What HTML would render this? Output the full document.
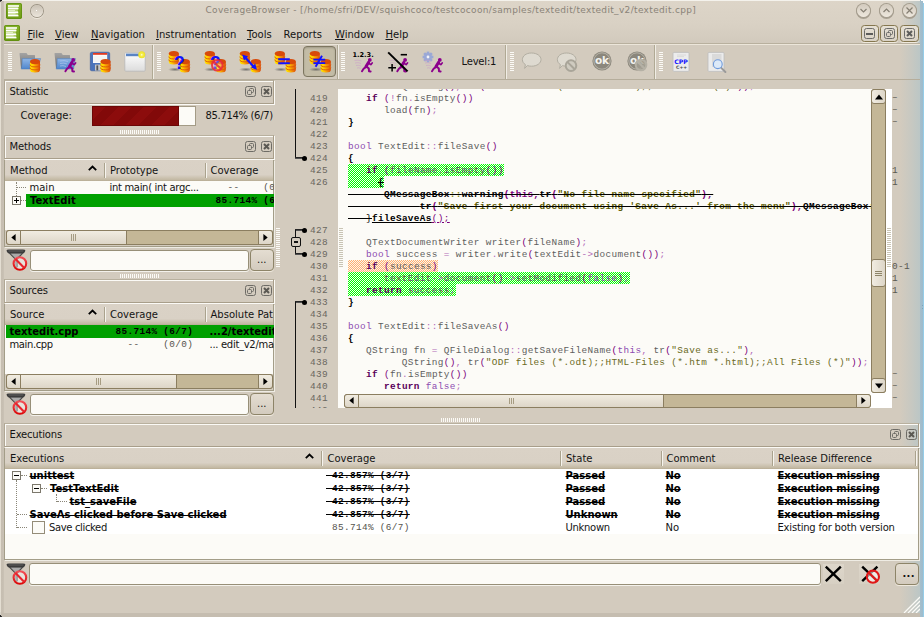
<!DOCTYPE html><html><head><meta charset="utf-8"><title>CoverageBrowser</title><style>
html,body{margin:0;padding:0}
body{width:924px;height:617px;overflow:hidden;position:relative;background:#d3cbbe;
 font:10px/13px "DejaVu Sans","Liberation Sans",sans-serif;color:#141414;}
.a{position:absolute}
.t{position:absolute;white-space:pre;line-height:13px;height:13px}
.b{font-weight:bold}
.m{font-family:"Liberation Mono","DejaVu Sans Mono",monospace;font-size:9.4px;letter-spacing:0.36px;white-space:pre}
.s{text-decoration:line-through}
u{text-decoration:underline}
#win{left:0;top:0;width:924px;height:617px;background:linear-gradient(#ddd5c8 0,#d9d1c4 24px,#d2cabd 43px,#d3cbbe 44px,#d3cbbe 617px)}
.dock{position:absolute;height:22px;border-top:1px solid #fbfaf6;border-right:1px solid #fbfaf6;border-bottom:1px solid #a39b86;box-shadow:0 1px 0 #fbfaf6;box-sizing:border-box;background:#d3cfc4}
.dock .t{left:5px;top:4px}
.dbtn{position:absolute;width:11px;height:11px;box-sizing:border-box;border:1px solid #6e6c66;border-radius:2.5px;top:5px}
.hdr{position:absolute;height:21px;box-sizing:border-box;background:linear-gradient(#dad2c6 0,#d9d1c5 70%,#c2b8a2 95%,#b5aa92 100%)}
.hdr .t{top:6px}
.sep{position:absolute;top:3px;width:1px;height:15px;background:#aaa28d;box-shadow:1px 0 0 #f6f4ee}
.view{position:absolute;background:#fcfbf7;border:1px solid #a39d88;border-top:0;box-sizing:border-box;box-shadow:1px 1px 0 #efece4}
.sel{position:absolute;background:#00a000;height:13px}
.hs{position:absolute;height:14px;background:#c4b797;box-sizing:border-box;border:1px solid #8b7e60;border-radius:3px}
.vs{position:absolute;width:14px;background:#c4b797;box-sizing:border-box;border:1px solid #8b7e60;border-radius:3px}
.sb{position:absolute;box-sizing:border-box;background:linear-gradient(#f1ece1,#ddd6c8);border:1px solid #8b7e60;border-radius:3px}
.vs .sb,.sbv{background:linear-gradient(90deg,#f1ece1,#ddd6c8)}
.inp{position:absolute;height:21px;background:#fcfbf7;border:1px solid #978f78;border-radius:3px;box-sizing:border-box;box-shadow:0 1px 0 #f4f2ec}
.btn{position:absolute;box-sizing:border-box;border:1px solid #8d8468;border-radius:4px;background:linear-gradient(#e4ddd1,#d3cbbe);box-shadow:0 1px 0 #efe9de}
.hh{position:absolute;height:4px;width:40px;background:repeating-linear-gradient(90deg,#fbfaf6 0,#fbfaf6 1px,transparent 1px,transparent 2px)}
.vh{position:absolute;width:4px;background:repeating-linear-gradient(180deg,#fbfaf6 0,#fbfaf6 1px,transparent 1px,transparent 2px)}
.tbh{position:absolute;width:4px;height:20px;top:52px;background:repeating-linear-gradient(180deg,#fbfaf6 0,#fbfaf6 1px,transparent 1px,transparent 2px)}
.tbs{position:absolute;top:45px;height:34px;width:1px;background:#b0a994;box-shadow:1px 0 0 #f0ede5}
.ic{position:absolute;width:24px;height:24px;overflow:visible}
.dot{position:absolute;border-top:1px dotted #8a8678;height:0}
.dotv{position:absolute;border-left:1px dotted #8a8678;width:0}
.exp{position:absolute;width:9px;height:9px;box-sizing:border-box;border:1px solid #7c786c;background:#fcfbf7}
.exp:before{content:"";position:absolute;left:1px;top:3px;width:5px;height:1px;background:#000}
.exp.p:after{content:"";position:absolute;left:3px;top:1px;width:1px;height:5px;background:#000}
.code{position:absolute;left:0;height:12px;line-height:12px;color:#5e5e5e}
.k{color:#5a005a;font-weight:bold}
.ty{color:#8c4ab0}
.p{color:#7a007a}
.st{color:#6a6a1c}
.bk{color:#000;font-weight:bold}
.gr{background:repeating-conic-gradient(#00ff00 0% 25%,#f6fbf0 0% 50%) 0 0/2px 2px}
.or{background:repeating-conic-gradient(#ffb070 0% 25%,#fcf6ee 0% 50%) 0 0/2px 2px}
.o{color:#b26ab8}
.del{text-decoration:line-through;text-decoration-color:#000;color:#000}
.del b{color:#000}
.ds{color:#8a8a20;font-weight:bold}
.dp{color:#7a007a;font-weight:bold}
.dst{color:#5c5c00;font-weight:bold}
.ins{color:#000;text-decoration:underline}
.insp{color:#7a007a;text-decoration:underline}
.ln{position:absolute;left:310px;width:20px;height:12px;line-height:12px;color:#6a675e}
</style></head><body>
<div id="win" class="a"></div>
<div class="a" style="left:0;top:0;width:924px;height:1px;background:#f4f2ec"></div>
<div class="a" style="left:0;top:1px;width:4px;height:616px;background:linear-gradient(90deg,#e4ded2 0,#e4ded2 1px,#c6beb1 1px,#c7bfb2 3.4px,#d3cbbe 4px)"></div>
<div class="a" style="left:900px;top:1px;width:20px;height:612px;background:linear-gradient(90deg,rgba(190,198,196,0),rgba(190,198,196,.55) 55%,rgba(186,198,198,.95))"></div>
<div class="a" style="left:920px;top:0;width:4px;height:617px;background:linear-gradient(90deg,#a6bfcc 0,#9dbccd 3px,#96cde8 3px,#96cde8 4px)"></div><div class="a" style="left:922px;top:305px;width:1px;height:1px;background:#7fa4b8"></div><div class="a" style="left:922px;top:308px;width:1px;height:1px;background:#7fa4b8"></div>
<div class="a" style="left:0;top:613px;width:920px;height:4px;background:#c5bdb0"></div><div class="a" style="left:0;top:615px;width:1px;height:2px;background:#222"></div><div class="a" style="left:1px;top:616px;width:1px;height:1px;background:#333"></div><div class="a" style="left:0;top:612px;width:1px;height:3px;background:#d8d2c6"></div>
<div class="a" style="left:0;top:0;width:2px;height:1px;background:#222"></div><div class="a" style="left:0;top:1px;width:1px;height:1px;background:#555"></div>
<div class="a" style="left:921px;top:0;width:3px;height:1px;background:#fff"></div><div class="a" style="left:923px;top:1px;width:1px;height:2px;background:#fff"></div>
<svg class="a" style="left:6px;top:3px" width="16" height="16" viewBox="0 0 16 16"><use href="#appicon"/></svg>
<svg class="a" style="left:4px;top:25px" width="16" height="16" viewBox="0 0 16 16"><use href="#appicon"/></svg>
<div class="a" style="left:30.5px;top:4.5px;width:12px;height:12px;border-radius:50%;background:linear-gradient(#c9c1b4,#ebe5db);box-shadow:0 0 0 1px #9c9485,0 1px 0 1px #efe9de"></div><div class="a" style="left:36px;top:10px;width:1px;height:1px;background:#fff"></div>
<div class="t" style="left:205.5px;top:4px;font-size:9px;letter-spacing:0.335px;color:#8a8378">CoverageBrowser - [/home/sfri/DEV/squishcoco/testcocoon/samples/textedit/textedit_v2/textedit.cpp]</div>
<div class="a" style="left:857.0px;top:4px;width:13px;height:13px;border-radius:50%;background:linear-gradient(#d2cabd,#eee8de);box-shadow:0 0 0 1px #a59d8e,0 1px 0 1px #a8a092"></div>
<svg class="a" style="left:856.0px;top:3px" width="15" height="15" viewBox="-7.5 -7.5 15 15"><path d="M-3 -1.5 L0 1.5 L3 -1.5" fill="none" stroke="#857f73" stroke-width="1.2"/></svg>
<div class="a" style="left:880.0px;top:4px;width:13px;height:13px;border-radius:50%;background:linear-gradient(#d2cabd,#eee8de);box-shadow:0 0 0 1px #a59d8e,0 1px 0 1px #a8a092"></div>
<svg class="a" style="left:879.0px;top:3px" width="15" height="15" viewBox="-7.5 -7.5 15 15"><path d="M-3 1.5 L0 -1.5 L3 1.5" fill="none" stroke="#857f73" stroke-width="1.2"/></svg>
<div class="a" style="left:903.0px;top:4px;width:13px;height:13px;border-radius:50%;background:linear-gradient(#d2cabd,#eee8de);box-shadow:0 0 0 1px #a59d8e,0 1px 0 1px #a8a092"></div>
<svg class="a" style="left:902.0px;top:3px" width="15" height="15" viewBox="-7.5 -7.5 15 15"><path d="M-3 -3 L3 3 M3 -3 L-3 3" fill="none" stroke="#857f73" stroke-width="1.2"/></svg>
<div class="t" style="left:27.5px;top:28px"><u>F</u>ile</div>
<div class="t" style="left:55px;top:28px"><u>V</u>iew</div>
<div class="t" style="left:91px;top:28px"><u>N</u>avigation</div>
<div class="t" style="left:156px;top:28px"><u>I</u>nstrumentation</div>
<div class="t" style="left:247px;top:28px"><u>T</u>ools</div>
<div class="t" style="left:283.5px;top:28px">Reports</div>
<div class="t" style="left:335px;top:28px"><u>W</u>indow</div>
<div class="t" style="left:385.5px;top:28px"><u>H</u>elp</div>
<div class="a" style="left:860.5px;top:25px;width:18px;height:17px;box-sizing:border-box;border:1px solid #85774f;border-radius:3.5px;background:linear-gradient(#e6e0d4,#d9d2c5);box-shadow:0 1px 0 #efe9de"></div>
<div class="a" style="left:864.0px;top:28px;width:11px;height:11px;box-sizing:border-box;border:1px solid #6c6c6a;border-radius:2.5px"></div>
<div class="a" style="left:866.0px;top:32.5px;width:7px;height:2px;background:#5c5c5a"></div>
<div class="a" style="left:880px;top:25px;width:18px;height:17px;box-sizing:border-box;border:1px solid #85774f;border-radius:3.5px;background:linear-gradient(#e6e0d4,#d9d2c5);box-shadow:0 1px 0 #efe9de"></div>
<div class="a" style="left:883.5px;top:28px;width:11px;height:11px;box-sizing:border-box;border:1px solid #6c6c6a;border-radius:2.5px"></div>
<svg class="a" style="left:883.5px;top:28px" width="11" height="11"><rect x="4.5" y="2.5" width="4" height="4" rx="1" fill="none" stroke="#6c6c6a"/><rect x="2.5" y="4.5" width="4" height="4" rx="1" fill="#d9d1c5" stroke="#6c6c6a"/></svg>
<div class="a" style="left:900.3px;top:25px;width:18.5px;height:17px;box-sizing:border-box;border:1px solid #85774f;border-radius:3.5px;background:linear-gradient(#e6e0d4,#d9d2c5);box-shadow:0 1px 0 #efe9de"></div>
<div class="a" style="left:904.05px;top:28px;width:11px;height:11px;box-sizing:border-box;border:1px solid #6c6c6a;border-radius:2.5px"></div>
<svg class="a" style="left:904.05px;top:28px" width="11" height="11"><path d="M3 3 L8 8 M8 3 L3 8" stroke="#5c5c5a" stroke-width="2" fill="none"/></svg>
<div class="a" style="left:4px;top:43px;width:916px;height:1px;background:#b8b09e"></div><div class="a" style="left:4px;top:44px;width:916px;height:1px;background:#ece6da"></div>
<div class="a" style="left:4px;top:79px;width:916px;height:1px;background:#b5ad9b"></div>
<div class="tbs" style="left:152px"></div>
<div class="tbs" style="left:337px"></div>
<div class="tbs" style="left:505px"></div>
<div class="tbs" style="left:654px"></div>
<div class="tbh" style="left:8px"></div>
<div class="tbh" style="left:157px"></div>
<div class="tbh" style="left:341px"></div>
<div class="tbh" style="left:510px"></div>
<div class="tbh" style="left:659px"></div>
<div class="a" style="left:303px;top:46px;width:33px;height:31px;box-sizing:border-box;border:1px solid #7d7660;border-radius:4px;background:#c3bca6;box-shadow:inset 0 1px 2px rgba(0,0,0,.18)"></div>
<div class="t" style="left:461.5px;top:55px;letter-spacing:-0.2px">Level:1</div>
<svg width="0" height="0" style="position:absolute"><defs>
<linearGradient id="gApp" x1="0" y1="0" x2="0" y2="1"><stop offset="0" stop-color="#86b22a"/><stop offset="1" stop-color="#6f9c14"/></linearGradient>
<linearGradient id="gDb" x1="0" y1="0" x2="1" y2="0"><stop offset="0" stop-color="#ffe800"/><stop offset=".35" stop-color="#ffc400"/><stop offset=".75" stop-color="#ee7a08"/><stop offset="1" stop-color="#d84808"/></linearGradient>
<linearGradient id="gFold" x1="0" y1="0" x2="0" y2="1"><stop offset="0" stop-color="#8fb6e6"/><stop offset="1" stop-color="#4f86cc"/></linearGradient>
<linearGradient id="gFoldB" x1="0" y1="0" x2="0" y2="1"><stop offset="0" stop-color="#a4a4a4"/><stop offset="1" stop-color="#6e6e6e"/></linearGradient>
<linearGradient id="gWin" x1="0" y1="0" x2="0" y2="1"><stop offset="0" stop-color="#ffffff"/><stop offset="1" stop-color="#dcdcdc"/></linearGradient>
<linearGradient id="gStem" x1="0" y1="0" x2="1" y2="0"><stop offset="0" stop-color="#8a8a8a"/><stop offset="1" stop-color="#3e3e3e"/></linearGradient><linearGradient id="gNo" x1="0" y1="0" x2="0" y2="1"><stop offset="0" stop-color="#f25058"/><stop offset="1" stop-color="#dc0808"/></linearGradient><radialGradient id="gStar"><stop offset="0" stop-color="#fffff0"/><stop offset=".35" stop-color="#f6ee50"/><stop offset="1" stop-color="#ece020"/></radialGradient>
<radialGradient id="gSh"><stop offset="0" stop-color="#555" stop-opacity=".75"/><stop offset="1" stop-color="#555" stop-opacity="0"/></radialGradient>
<g id="appicon"><rect x="0" y="0" width="16" height="16" rx="1.8" fill="url(#gApp)"/><rect x="0.5" y="0.5" width="15" height="15" rx="1.6" fill="none" stroke="#5c8a0e" stroke-opacity=".7"/><path d="M2 2 H13 L12 4 L13 5.5 L11.6 7.5 L12.8 9.5 L11.8 11.5 L12.6 13.5 H2 Z" fill="#bcd67c" fill-opacity=".85"/><path d="M2 3 H13 M2 5.6 H12.2 M2 9.2 H12 M2 12.6 H12.4" stroke="#fff" stroke-width="1.5"/><path d="M2 7.4 H9 M2 10.9 H9.6" stroke="#e8f2cc" stroke-width="1"/></g>
<g id="filt"><path d="M1.5 3 L9 10.5 V18.3 H11.6 V10.5 L18.5 3 Z" fill="#4a4a4a"/><path d="M4.6 4.4 H15.6 L10.6 9.6 H9.4 Z" fill="#a9a9a9"/><path d="M9 10.5 H11.6 V18.3 H9 Z" fill="url(#gStem)"/><path d="M0.5 1.6 Q0.5 0.4 3 0.4 H16.8 Q19.4 0.4 19.4 1.6 Q19.4 2.6 17.6 4.3 H2.2 Q0.5 2.6 0.5 1.6 Z" fill="#3c3c3c"/><path d="M2.5 2 H17.3" stroke="#5a5a5a" stroke-width="1.2"/><circle cx="13.9" cy="14.5" r="6.3" fill="rgba(255,255,255,.45)" stroke="url(#gNo)" stroke-width="2.1"/><path d="M9.5 10.1 L18.3 18.9" stroke="#e8242c" stroke-width="2.1"/></g>
<g id="db"><path d="M0 2.5 V11 A5 2.5 0 0 0 10 11 V2.5 Z" fill="url(#gDb)"/><path d="M0 5.6 A5 2.3 0 0 0 10 5.6 M0 8.6 A5 2.3 0 0 0 10 8.6" fill="none" stroke="#de5a08" stroke-width="1"/><ellipse cx="5" cy="2.6" rx="5" ry="2.6" fill="#d84a0a"/></g>
<g id="db2"><ellipse cx="7" cy="18.5" rx="7" ry="2" fill="url(#gSh)"/><use href="#db" x="0.8" y="0"/><use href="#db" x="11.8" y="8"/></g>
<g id="run" fill="none" stroke="#8c008c" stroke-linecap="round" stroke-linejoin="round"><circle cx="8.8" cy="1.9" r="1.9" fill="#8c008c" stroke="none"/><path d="M7.6 4.2 L5 8.6" stroke-width="3"/><path d="M7 5 L9.8 6.6 L11.2 5" stroke-width="1.7"/><path d="M5.4 8.6 L2.6 10.8 L1 13.2" stroke-width="2"/><path d="M5.6 8.6 L7.8 10.6 L8 13.2 L9.6 13.4" stroke-width="2"/></g>
<g id="folder"><path d="M0.5 2.5 Q0.5 2 1 2 H7.5 L8.8 4 H15.5 Q16 4 16 4.5 V17 H2 Z" fill="url(#gFoldB)"/><path d="M3.2 7.6 H21.6 Q20 12 19.6 18 H2.2 Q3.4 13 3.2 7.6 Z" fill="url(#gFold)" stroke="#4a7ab8" stroke-width=".5"/></g>
<g id="nosign"><circle cx="0" cy="0" r="5.3" fill="none" stroke-width="2"/><path d="M-3.7 -3.7 L3.7 3.7" stroke-width="2"/></g>
<g id="bubble"><path d="M9.5 2 C15 2 19 5 19 8.6 C19 12.2 15 15.2 9.5 15.2 C8 15.2 6.6 15 5.4 14.6 L2.6 17.4 L3.4 13.6 C1.4 12.4 0.4 10.6 0.4 8.6 C0.4 5 4 2 9.5 2 Z" fill="#dedad0" stroke="#b2aea2" stroke-width="1"/></g>
<g id="okc"><circle cx="10" cy="10" r="9.6" fill="#8b877c"/><circle cx="10" cy="10" r="8.2" fill="none" stroke="#c2beb2" stroke-width=".8"/></g>
</defs></svg>
<svg class="ic" style="left:19px;top:51px" width="24" height="24" viewBox="0 0 24 24"><use href="#folder" y="0"/><use href="#db" x="11" y="8"/></svg><svg class="ic" style="left:54px;top:51px" width="24" height="24" viewBox="0 0 24 24"><use href="#folder" y="0"/><path d="M6 10 Q10 9 14 10.5 M6 12.5 Q10 11.5 13 13 M6 15 Q9 14 12 15.5" stroke="#b8cdf0" stroke-width=".6" fill="none"/><use href="#run" x="10.4" y="7"/></svg><svg class="ic" style="left:90px;top:51px" width="24" height="24" viewBox="0 0 24 24"><rect x="0.3" y="1.2" width="19.4" height="18.6" rx="1.5" fill="#4c74ba" stroke="#35589a" stroke-width=".6"/><rect x="3" y="2" width="14.2" height="10" fill="#fafafa"/><rect x="3" y="2" width="14.2" height="1.8" fill="#e23a22"/><path d="M3.5 6 H16.5 M3.5 8 H16.5 M3.5 10 H16.5" stroke="#e0e0e0" stroke-width=".5"/><rect x="5" y="13.6" width="6" height="6" fill="#c8c8c8"/><rect x="6.4" y="14.4" width="1.8" height="5" fill="#555"/><use href="#db" x="10.5" y="8"/></svg><svg class="ic" style="left:124px;top:51px" width="24" height="24" viewBox="0 0 24 24"><rect x="0.8" y="1.8" width="20.4" height="18.4" rx="1" fill="url(#gWin)" stroke="#b8b8b8" stroke-width=".8"/><rect x="2" y="2.6" width="14.5" height="2.6" fill="#5a84c4"/><circle cx="17.7" cy="3.8" r="3.5" fill="url(#gStar)"/></svg><svg class="ic" style="left:168px;top:51px" width="24" height="24" viewBox="0 0 24 24"><use href="#db2"/><text x="6.0" y="17.8" font-family="Liberation Sans,sans-serif" font-weight="bold" font-size="17.5" fill="#1212ff">?</text></svg><svg class="ic" style="left:204px;top:51px" width="24" height="24" viewBox="0 0 24 24"><use href="#db2"/><text x="6.0" y="17.8" font-family="Liberation Sans,sans-serif" font-weight="bold" font-size="17.5" fill="#1212ff">?</text><circle cx="13.3" cy="14.2" r="5.3" fill="rgba(255,200,190,.35)"/><use href="#nosign" x="13.3" y="14.2" stroke="#e8283a" stroke-opacity=".85"/></svg><svg class="ic" style="left:239px;top:51px" width="24" height="24" viewBox="0 0 24 24"><use href="#db2"/><path d="M5 5.2 L16 17" stroke="#1212ff" stroke-width="2.2"/><path d="M3.2 3.4 L9.2 5.4 L5 9.6 Z M18 18.8 L12 16.6 L16.2 12.6 Z" fill="#1212ff"/></svg><svg class="ic" style="left:274px;top:51px" width="24" height="24" viewBox="0 0 24 24"><use href="#db2"/><path d="M4.2 8.2 H15.8 M4.2 12.3 H15.8" stroke="#1212ff" stroke-width="2"/></svg><svg class="ic" style="left:309px;top:51px" width="24" height="24" viewBox="0 0 24 24"><use href="#db2"/><path d="M4.4 8.6 H16.2 M4.4 12.1 H16.2" stroke="#1212ff" stroke-width="1.9"/><path d="M13 4.8 L6.6 15.8" stroke="#1212ff" stroke-width="1.9"/></svg><svg class="ic" style="left:352px;top:51px" width="24" height="24" viewBox="0 0 24 24"><text x="0.4" y="5.8" font-family="DejaVu Sans,sans-serif" font-weight="bold" font-size="6.6" fill="#000">1.2.3.</text><path d="M2.5 9.5 Q6 8.5 9.5 10 M3 12 Q6 11 9 12.5 M4 14.5 Q6.5 13.8 9 15 M5 17 Q7 16.4 8.6 17.4" stroke="#c9a0c8" stroke-width=".6" fill="none"/><use href="#run" x="9" y="7"/></svg><svg class="ic" style="left:387px;top:51px" width="24" height="24" viewBox="0 0 24 24"><path d="M2.5 9.5 Q6 8.5 9.5 10 M3 12 Q6 11 9 12.5 M4 14.5 Q6.5 13.8 9 15 M5 17 Q7 16.4 8.6 17.4" stroke="#c9a0c8" stroke-width=".6" fill="none"/><use href="#run" x="9.3" y="7"/><path d="M1.2 1.4 L20.6 20.4" stroke="#000" stroke-width="2"/><path d="M13.7 3.7 H20" stroke="#000" stroke-width="1.6"/><path d="M1.3 16.7 H9 M5.1 13 V20.4" stroke="#000" stroke-width="1.5"/></svg><svg class="ic" style="left:422px;top:51px" width="24" height="24" viewBox="0 0 24 24"><g transform="translate(6,6)"><g fill="#9aa8d6"><rect x="-1.3" y="-5.4" width="2.6" height="3" transform="rotate(0)"/><rect x="-1.3" y="-5.4" width="2.6" height="3" transform="rotate(45)"/><rect x="-1.3" y="-5.4" width="2.6" height="3" transform="rotate(90)"/><rect x="-1.3" y="-5.4" width="2.6" height="3" transform="rotate(135)"/><rect x="-1.3" y="-5.4" width="2.6" height="3" transform="rotate(180)"/><rect x="-1.3" y="-5.4" width="2.6" height="3" transform="rotate(225)"/><rect x="-1.3" y="-5.4" width="2.6" height="3" transform="rotate(270)"/><rect x="-1.3" y="-5.4" width="2.6" height="3" transform="rotate(315)"/><circle r="3.9"/></g><circle r="1.4" fill="#f4f4f8"/></g><path d="M2.5 9.5 Q6 8.5 9.5 10 M3 12 Q6 11 9 12.5 M4 14.5 Q6.5 13.8 9 15 M5 17 Q7 16.4 8.6 17.4" stroke="#c9a0c8" stroke-width=".6" fill="none"/><use href="#run" x="9" y="7"/></svg><svg class="ic" style="left:522px;top:51px" width="24" height="24" viewBox="0 0 24 24"><use href="#bubble" x="0" y="0"/></svg><svg class="ic" style="left:557px;top:51px" width="24" height="24" viewBox="0 0 24 24"><use href="#bubble" x="0" y="0"/><circle cx="14" cy="14.6" r="5.4" fill="#cfcbc0"/><use href="#nosign" x="14" y="14.6" stroke="#a9a599"/></svg><svg class="ic" style="left:592px;top:51px" width="24" height="24" viewBox="0 0 24 24"><use href="#okc"/><text x="10" y="13.4" text-anchor="middle" font-family="DejaVu Sans,sans-serif" font-weight="bold" font-size="10.5" fill="#f4f2ec">ok</text></svg><svg class="ic" style="left:627px;top:51px" width="24" height="24" viewBox="0 0 24 24"><use href="#okc"/><text x="10" y="13.4" text-anchor="middle" font-family="DejaVu Sans,sans-serif" font-weight="bold" font-size="10.5" fill="#f4f2ec">ok</text><circle cx="14" cy="14" r="5.4" fill="#a5a195" fill-opacity=".8"/><use href="#nosign" x="14" y="14" stroke="#b5b1a5"/></svg><svg class="ic" style="left:672px;top:51px" width="24" height="24" viewBox="0 0 24 24"><rect x="1" y="1.4" width="16" height="19" rx="1" fill="#ececec" stroke="#bdbdbd" stroke-width=".8"/><path d="M5 4 H14 M5 5.6 H12" stroke="#d6d6d6" stroke-width=".8"/><text x="9" y="13.3" text-anchor="middle" font-family="DejaVu Sans,sans-serif" font-weight="bold" font-size="6.2" fill="#1414ff">CPP</text><text x="9.6" y="18.2" text-anchor="middle" font-family="DejaVu Sans,sans-serif" font-weight="bold" font-size="4.6" fill="#444">C++</text></svg><svg class="ic" style="left:707px;top:51px" width="24" height="24" viewBox="0 0 24 24"><rect x="1" y="1.4" width="16" height="19" rx="1" fill="#ebebeb" stroke="#bdbdbd" stroke-width=".8"/><rect x="5" y="3" width="9.5" height="13" fill="#dadada"/><path d="M14 16.6 L18.4 21" stroke="#9a9a9a" stroke-width="2" stroke-linecap="round"/><circle cx="10.8" cy="13.2" r="4.4" fill="#dce9f8" stroke="#6f9bdc" stroke-width="1.1"/></svg>
<div class="a" style="left:5px;top:81px;width:270px;height:24px;box-sizing:border-box;border:1px solid #fbfaf6"></div><div class="a" style="left:4px;top:80px;width:270px;height:24px;box-sizing:border-box;border:1px solid #a89e8a;border-top-color:#b8b09e;border-left-color:#b0a794"></div><div class="t" style="left:9.5px;top:85px;letter-spacing:-0.18px">Statistic</div><div class="dbtn" style="left:245px;top:86px"></div><svg class="a" style="left:245px;top:86px" width="11" height="11"><rect x="4.5" y="2.5" width="4" height="4" rx="1" fill="none" stroke="#6e6c66"/><rect x="2.5" y="4.5" width="4" height="4" rx="1" fill="#d3cbbe" stroke="#6e6c66"/></svg><div class="dbtn" style="left:261px;top:86px"></div><svg class="a" style="left:261px;top:86px" width="11" height="11"><path d="M3 3 L8 8 M8 3 L3 8" stroke="#5a5852" stroke-width="2" fill="none"/></svg><div class="t" style="left:20.5px;top:109px;">Coverage:</div><div class="a" style="left:92px;top:106px;width:104px;height:20px;box-sizing:border-box;border:1px solid #a39b86;background:#fcfbf7"></div><div class="a" style="left:92px;top:106px;width:87px;height:20px;box-sizing:border-box;border:1px solid #6c0606;background:repeating-linear-gradient(135deg,#8c0c0c 0,#8c0c0c 9px,#820909 9px,#820909 18px)"></div><div class="t" style="left:205.5px;top:109px;letter-spacing:-0.33px">85.714% (6/7)</div><div class="hh" style="left:120px;top:130px"></div><div class="a" style="left:5px;top:136px;width:270px;height:24px;box-sizing:border-box;border:1px solid #fbfaf6"></div><div class="a" style="left:4px;top:135px;width:270px;height:24px;box-sizing:border-box;border:1px solid #a89e8a;border-top-color:#b8b09e;border-left-color:#b0a794"></div><div class="t" style="left:9.5px;top:140px;letter-spacing:-0.18px">Methods</div><div class="dbtn" style="left:245px;top:141px"></div><svg class="a" style="left:245px;top:141px" width="11" height="11"><rect x="4.5" y="2.5" width="4" height="4" rx="1" fill="none" stroke="#6e6c66"/><rect x="2.5" y="4.5" width="4" height="4" rx="1" fill="#d3cbbe" stroke="#6e6c66"/></svg><div class="dbtn" style="left:261px;top:141px"></div><svg class="a" style="left:261px;top:141px" width="11" height="11"><path d="M3 3 L8 8 M8 3 L3 8" stroke="#5a5852" stroke-width="2" fill="none"/></svg><div class="view" style="left:4px;top:160px;width:270px;height:87px"></div><div class="hdr" style="left:5px;top:160px;width:268px"></div><div class="t" style="left:10px;top:164px;">Method</div><div class="sep" style="left:104px;top:163px"></div><div class="t" style="left:110px;top:164px;">Prototype</div><div class="sep" style="left:205px;top:163px"></div><div class="t" style="left:210.5px;top:164px;">Coverage</div><svg class="a" style="left:88px;top:165px" width="9" height="6"><path d="M0.8 5.2 L4.5 1.5 L8.2 5.2" fill="none" stroke="#000" stroke-width="1.8"/></svg><div class="dotv" style="left:16px;top:182px;height:14px"></div><div class="dot" style="left:17px;top:187px;width:9px"></div><div class="t" style="left:29.5px;top:181px;">main</div><div class="t" style="left:109.5px;top:181px;letter-spacing:-0.32px">int main( int argc...</div><div class="t m " style="left:209.5px;top:181px;color:#55534c;width:64px;overflow:hidden">   --    (0/0)</div><div class="sel" style="left:26px;top:194px;width:248px"></div><div class="dot" style="left:21px;top:200px;width:5px"></div><div class="exp p" style="left:12px;top:196px"></div><div class="t b" style="left:30px;top:194px;color:#000">TextEdit</div><div class="t m b" style="left:209.5px;top:194px;color:#000;width:64px;overflow:hidden"> 85.714% (6/7)</div><div class="a" style="left:5px;top:230px;width:268px;height:16px;background:#d3cbbe"></div><div class="hs" style="left:6px;top:230px;width:267px;height:15px"></div><div class="sb" style="left:6px;top:230px;width:15px;height:15px;border-radius:3px 0 0 3px"></div><svg class="a" style="left:11px;top:234.0px" width="5" height="7"><path d="M4.6 0 L4.6 7 L0.3 3.5 Z" fill="#000"/></svg><div class="sb" style="left:20px;top:230px;width:107px;height:15px;border-radius:0"></div><div class="a" style="left:71px;top:234px;width:1px;height:7px;background:#a69c82"></div><div class="a" style="left:73px;top:234px;width:1px;height:7px;background:#a69c82"></div><div class="a" style="left:75px;top:234px;width:1px;height:7px;background:#a69c82"></div><div class="sb" style="left:258px;top:230px;width:15px;height:15px;border-radius:0 3px 3px 0"></div><svg class="a" style="left:263px;top:234.0px" width="5" height="7"><path d="M0.4 0 L0.4 7 L4.7 3.5 Z" fill="#000"/></svg><svg class="a" style="left:6px;top:249px" width="22" height="22" viewBox="0 0 22 22"><use href="#filt"/></svg><div class="inp" style="left:30px;top:250px;width:219px"></div><div class="btn" style="left:250px;top:249px;width:24px;height:22px"></div><div class="t" style="left:257px;top:253px;">...</div><div class="hh" style="left:120px;top:274px"></div><div class="vh" style="left:276px;top:228px;height:40px"></div><div class="a" style="left:5px;top:280px;width:270px;height:24px;box-sizing:border-box;border:1px solid #fbfaf6"></div><div class="a" style="left:4px;top:279px;width:270px;height:24px;box-sizing:border-box;border:1px solid #a89e8a;border-top-color:#b8b09e;border-left-color:#b0a794"></div><div class="t" style="left:9.5px;top:284px;letter-spacing:-0.18px">Sources</div><div class="dbtn" style="left:245px;top:285px"></div><svg class="a" style="left:245px;top:285px" width="11" height="11"><rect x="4.5" y="2.5" width="4" height="4" rx="1" fill="none" stroke="#6e6c66"/><rect x="2.5" y="4.5" width="4" height="4" rx="1" fill="#d3cbbe" stroke="#6e6c66"/></svg><div class="dbtn" style="left:261px;top:285px"></div><svg class="a" style="left:261px;top:285px" width="11" height="11"><path d="M3 3 L8 8 M8 3 L3 8" stroke="#5a5852" stroke-width="2" fill="none"/></svg><div class="view" style="left:4px;top:304px;width:270px;height:87px"></div><div class="hdr" style="left:5px;top:304px;width:268px"></div><div class="t" style="left:10px;top:308px;">Source</div><div class="sep" style="left:104px;top:307px"></div><div class="t" style="left:110px;top:308px;">Coverage</div><div class="sep" style="left:205px;top:307px"></div><div class="t" style="left:210.5px;top:308px;">Absolute Pat</div><svg class="a" style="left:88px;top:309px" width="9" height="6"><path d="M0.8 5.2 L4.5 1.5 L8.2 5.2" fill="none" stroke="#000" stroke-width="1.8"/></svg><div class="sel" style="left:6px;top:325px;width:268px"></div><div class="t b" style="left:9.5px;top:325px;color:#000">textedit.cpp</div><div class="t m b" style="left:109.5px;top:325px;color:#000"> 85.714% (6/7)</div><div class="t b" style="left:209.5px;top:325px;color:#000;width:64px;overflow:hidden">...2/textedit.cpp</div><div class="t" style="left:9.5px;top:338px;letter-spacing:-0.4px">main.cpp</div><div class="t m " style="left:109.5px;top:338px;color:#55534c">   --    (0/0)</div><div class="t" style="left:209.5px;top:338px;width:64px;overflow:hidden;letter-spacing:-0.3px">... edit_v2/main.cpp</div><div class="a" style="left:5px;top:374px;width:268px;height:16px;background:#d3cbbe"></div><div class="hs" style="left:6px;top:374px;width:267px;height:15px"></div><div class="sb" style="left:6px;top:374px;width:15px;height:15px;border-radius:3px 0 0 3px"></div><svg class="a" style="left:11px;top:378.0px" width="5" height="7"><path d="M4.6 0 L4.6 7 L0.3 3.5 Z" fill="#000"/></svg><div class="sb" style="left:20px;top:374px;width:157px;height:15px;border-radius:0"></div><div class="a" style="left:96px;top:378px;width:1px;height:7px;background:#a69c82"></div><div class="a" style="left:98px;top:378px;width:1px;height:7px;background:#a69c82"></div><div class="a" style="left:100px;top:378px;width:1px;height:7px;background:#a69c82"></div><div class="sb" style="left:258px;top:374px;width:15px;height:15px;border-radius:0 3px 3px 0"></div><svg class="a" style="left:263px;top:378.0px" width="5" height="7"><path d="M0.4 0 L0.4 7 L4.7 3.5 Z" fill="#000"/></svg><svg class="a" style="left:6px;top:393px" width="22" height="22" viewBox="0 0 22 22"><use href="#filt"/></svg><div class="inp" style="left:30px;top:394px;width:219px"></div><div class="btn" style="left:250px;top:393px;width:24px;height:22px"></div><div class="t" style="left:257px;top:397px;">...</div>
<div class="a" style="left:295px;top:89px;width:1px;height:70px;background:#111"></div><div class="a" style="left:295px;top:157px;width:8px;height:2px;background:linear-gradient(#111,#666)"></div><div class="a" style="left:302px;top:155.5px;width:5px;height:5px;border-radius:50%;background:#000"></div><div class="a" style="left:295px;top:229px;width:8px;height:2px;background:linear-gradient(#111,#666)"></div><div class="a" style="left:302px;top:227.5px;width:5px;height:5px;border-radius:50%;background:#000"></div><div class="a" style="left:295px;top:230px;width:1px;height:25px;background:#111"></div><div class="a" style="left:295px;top:253px;width:8px;height:2px;background:linear-gradient(#111,#666)"></div><div class="a" style="left:302px;top:251.5px;width:5px;height:5px;border-radius:50%;background:#000"></div><div class="a" style="left:291px;top:237px;width:10px;height:10px;box-sizing:border-box;border:1.5px solid #111;border-radius:2px;background:#d3cbbe"></div><div class="a" style="left:294px;top:241.3px;width:4px;height:1.6px;background:#111"></div><div class="a" style="left:295px;top:301px;width:8px;height:2px;background:linear-gradient(#111,#666)"></div><div class="a" style="left:302px;top:299.5px;width:5px;height:5px;border-radius:50%;background:#000"></div><div class="a" style="left:295px;top:302px;width:1px;height:106px;background:#111"></div><div class="a" id="code" style="left:338px;top:89px;width:554px;height:318.5px;background:#fcfbf7;overflow:hidden"></div><div class="a" style="left:886px;top:89px;width:6px;height:318.5px;background:#fff"></div><div class="a" style="left:871px;top:393px;width:21px;height:14.5px;background:#fff"></div><div class="a m" style="left:0;top:89px;width:924px;height:318.5px;overflow:hidden"><div class="code" style="left:348px;top:-8px;width:523px;overflow:hidden">         QString<span class="p">()</span><span class="o">,</span> tr<span class="p">(</span><span class="st">&quot;HTML-Files (*.htm *.html);;All Files (*)&quot;</span><span class="p">))</span><span class="o">;</span></div><div class="ln" style="top:4px">419</div><div class="code" style="left:348px;top:4px;width:523px;overflow:hidden">   <span class="k">if</span> <span class="p">(</span><span class="o">!</span>fn<span class="o">.</span>isEmpty<span class="p">())</span></div><div class="ln" style="top:16px">420</div><div class="code" style="left:348px;top:16px;width:523px;overflow:hidden">      load<span class="p">(</span>fn<span class="p">)</span><span class="o">;</span></div><div class="ln" style="top:28px">421</div><div class="code" style="left:348px;top:28px;width:523px;overflow:hidden"><span class="bk">}</span></div><div class="ln" style="top:40px">422</div><div class="ln" style="top:52px">423</div><div class="code" style="left:348px;top:52px;width:523px;overflow:hidden"><span class="ty">bool</span> TextEdit<span class="o">::</span>fileSave<span class="p">()</span></div><div class="ln" style="top:64px">424</div><div class="code" style="left:348px;top:64px;width:523px;overflow:hidden"><span class="bk">{</span></div><div class="ln" style="top:76px">425</div><div class="a gr" style="left:348px;top:75px;width:156px;height:12px"></div><div class="code" style="left:348px;top:76px;width:523px;overflow:hidden">   <span class="k">if</span> <span class="p">(</span>fileName<span class="o">.</span>isEmpty<span class="p">())</span></div><div class="ln" style="top:88px">426</div><div class="a gr" style="left:348px;top:87px;width:36px;height:12px"></div><div class="code" style="left:348px;top:88px;width:523px;overflow:hidden">     <span class="bk s">{</span></div><div class="code" style="left:348px;top:100px;width:523px;overflow:hidden"><span class="del">      <b>QMessageBox</b><span class="ds">::</span><b>warning</b><span class="dp">(this,</span><b>tr</b><span class="dp">(</span><span class="dst">&quot;No file name specified&quot;</span><span class="dp">),</span></span></div><div class="code" style="left:348px;top:112px;width:523px;overflow:hidden"><span class="del">            <b>tr</b><span class="dp">(</span><span class="dst">&quot;Save first your document using 'Save As...' from the menu&quot;</span><span class="dp">),</span><b>QMessageBox</b><span class="ds">::</span><b>Ok</b><span class="dp">);</span></span></div><div class="code" style="left:348px;top:124px;width:523px;overflow:hidden"><span class="del">   }</span><u class="ins"><b>fileSaveAs</b></u><u class="insp">();</u></div><div class="ln" style="top:136px">427</div><div class="ln" style="top:148px">428</div><div class="code" style="left:348px;top:148px;width:523px;overflow:hidden">   QTextDocumentWriter writer<span class="p">(</span>fileName<span class="p">)</span><span class="o">;</span></div><div class="ln" style="top:160px">429</div><div class="code" style="left:348px;top:160px;width:523px;overflow:hidden">   <span class="ty">bool</span> success <span class="o">=</span> writer<span class="o">.</span>write<span class="p">(</span>textEdit<span class="o">-&gt;</span>document<span class="p">())</span><span class="o">;</span></div><div class="ln" style="top:172px">430</div><div class="a or" style="left:348px;top:171px;width:90px;height:12px"></div><div class="code" style="left:348px;top:172px;width:523px;overflow:hidden">   <span class="k">if</span> <span class="p">(</span>success<span class="p">)</span></div><div class="ln" style="top:184px">431</div><div class="a gr" style="left:348px;top:183px;width:282px;height:12px"></div><div class="code" style="left:348px;top:184px;width:523px;overflow:hidden">      textEdit<span class="o">-&gt;</span>document<span class="p">()</span><span class="o">-&gt;</span>setModified<span class="p">(</span><span class="ty">false</span><span class="p">)</span><span class="o">;</span></div><div class="ln" style="top:196px">432</div><div class="a gr" style="left:348px;top:195px;width:108px;height:12px"></div><div class="code" style="left:348px;top:196px;width:523px;overflow:hidden">   <span class="k">return</span> success<span class="o">;</span></div><div class="ln" style="top:208px">433</div><div class="code" style="left:348px;top:208px;width:523px;overflow:hidden"><span class="bk">}</span></div><div class="ln" style="top:220px">434</div><div class="ln" style="top:232px">435</div><div class="code" style="left:348px;top:232px;width:523px;overflow:hidden"><span class="ty">bool</span> TextEdit<span class="o">::</span>fileSaveAs<span class="p">()</span></div><div class="ln" style="top:244px">436</div><div class="code" style="left:348px;top:244px;width:523px;overflow:hidden"><span class="bk">{</span></div><div class="ln" style="top:256px">437</div><div class="code" style="left:348px;top:256px;width:523px;overflow:hidden">   QString fn <span class="o">=</span> QFileDialog<span class="o">::</span>getSaveFileName<span class="p">(</span><span class="ty">this</span><span class="o">,</span> tr<span class="p">(</span><span class="st">&quot;Save as...&quot;</span><span class="p">)</span><span class="o">,</span></div><div class="ln" style="top:268px">438</div><div class="code" style="left:348px;top:268px;width:523px;overflow:hidden">         QString<span class="p">()</span><span class="o">,</span> tr<span class="p">(</span><span class="st">&quot;ODF files (*.odt);;HTML-Files (*.htm *.html);;All Files (*)&quot;</span><span class="p">))</span><span class="o">;</span></div><div class="ln" style="top:280px">439</div><div class="code" style="left:348px;top:280px;width:523px;overflow:hidden">   <span class="k">if</span> <span class="p">(</span>fn<span class="o">.</span>isEmpty<span class="p">())</span></div><div class="ln" style="top:292px">440</div><div class="code" style="left:348px;top:292px;width:523px;overflow:hidden">      <span class="k">return</span> <span class="ty">false</span><span class="o">;</span></div><div class="ln" style="top:304px">441</div><div class="code" style="left:348px;top:304px;width:523px;overflow:hidden">      </div><div class="ln" style="top:316px">442</div><div class="a" style="left:892px;top:3px;height:12px;line-height:12px;color:#5a5850">–</div><div class="a" style="left:892px;top:15px;height:12px;line-height:12px;color:#5a5850">–</div><div class="a" style="left:892px;top:27px;height:12px;line-height:12px;color:#5a5850">–</div><div class="a" style="left:892px;top:279px;height:12px;line-height:12px;color:#5a5850">–</div><div class="a" style="left:892px;top:291px;height:12px;line-height:12px;color:#5a5850">–</div><div class="a" style="left:892px;top:303px;height:12px;line-height:12px;color:#5a5850">–</div><div class="a" style="left:892px;top:76px;height:12px;line-height:12px;color:#5a5850">1</div><div class="a" style="left:892px;top:88px;height:12px;line-height:12px;color:#5a5850">1</div><div class="a" style="left:892px;top:184px;height:12px;line-height:12px;color:#5a5850">1</div><div class="a" style="left:892px;top:196px;height:12px;line-height:12px;color:#5a5850">1</div><div class="a" style="left:892px;top:172px;height:12px;line-height:12px;color:#5a5850">0-1</div></div><div class="vh" style="left:339px;top:228px;height:40px;background:repeating-linear-gradient(180deg,#c9c4b4 0,#c9c4b4 1px,transparent 1px,transparent 2px)"></div><div class="vh" style="left:887px;top:228px;height:40px;background:repeating-linear-gradient(180deg,#c9c4b4 0,#c9c4b4 1px,transparent 1px,transparent 2px)"></div><div class="vs" style="left:871px;top:89px;height:304px;width:15px"></div><div class="sb sbv" style="left:871px;top:89px;width:15px;height:15px"></div><svg class="a" style="left:874.5px;top:93.5px" width="8" height="6"><path d="M0 5.5 L8 5.5 L4 0.5 Z" fill="#000"/></svg><div class="sb sbv" style="left:871px;top:259px;width:15px;height:28px"></div><div class="a" style="left:875px;top:271px;width:7px;height:1px;background:#8d8468"></div><div class="a" style="left:875px;top:273px;width:7px;height:1px;background:#8d8468"></div><div class="a" style="left:875px;top:275px;width:7px;height:1px;background:#8d8468"></div><div class="sb sbv" style="left:871px;top:378px;width:15px;height:15px"></div><svg class="a" style="left:874.5px;top:383px" width="8" height="6"><path d="M0 0.5 L8 0.5 L4 5.5 Z" fill="#000"/></svg><div class="hs" style="left:344px;top:393.5px;width:527px;height:14px"></div><div class="sb" style="left:344px;top:393.5px;width:15px;height:14px;border-radius:3px 0 0 3px"></div><svg class="a" style="left:349px;top:397.0px" width="5" height="7"><path d="M4.6 0 L4.6 7 L0.3 3.5 Z" fill="#000"/></svg><div class="sb" style="left:358px;top:393.5px;width:306px;height:14px;border-radius:0"></div><div class="a" style="left:509px;top:397.5px;width:1px;height:6px;background:#a69c82"></div><div class="a" style="left:511px;top:397.5px;width:1px;height:6px;background:#a69c82"></div><div class="a" style="left:513px;top:397.5px;width:1px;height:6px;background:#a69c82"></div><div class="sb" style="left:856px;top:393.5px;width:15px;height:14px;border-radius:0 3px 3px 0"></div><svg class="a" style="left:861px;top:397.0px" width="5" height="7"><path d="M0.4 0 L0.4 7 L4.7 3.5 Z" fill="#000"/></svg><div class="hh" style="left:441px;top:418px"></div>
<div class="a" style="left:5px;top:424px;width:915px;height:24px;box-sizing:border-box;border:1px solid #fbfaf6"></div><div class="a" style="left:4px;top:423px;width:915px;height:24px;box-sizing:border-box;border:1px solid #a89e8a;border-top-color:#b8b09e;border-left-color:#b0a794"></div><div class="t" style="left:9.5px;top:428px;letter-spacing:-0.18px">Executions</div><div class="dbtn" style="left:890px;top:429px"></div><svg class="a" style="left:890px;top:429px" width="11" height="11"><rect x="4.5" y="2.5" width="4" height="4" rx="1" fill="none" stroke="#6e6c66"/><rect x="2.5" y="4.5" width="4" height="4" rx="1" fill="#d3cbbe" stroke="#6e6c66"/></svg><div class="dbtn" style="left:906px;top:429px"></div><svg class="a" style="left:906px;top:429px" width="11" height="11"><path d="M3 3 L8 8 M8 3 L3 8" stroke="#5a5852" stroke-width="2" fill="none"/></svg><div class="view" style="left:4px;top:448px;width:915px;height:112px"></div><div class="a" style="left:5px;top:469px;width:913px;height:65px;background:#fff"></div><div class="hdr" style="left:5px;top:448px;width:913px"></div><div class="t" style="left:10px;top:452px;">Executions</div><div class="sep" style="left:321px;top:451px"></div><div class="t" style="left:327.5px;top:452px;">Coverage</div><div class="sep" style="left:560px;top:451px"></div><div class="t" style="left:566px;top:452px;">State</div><div class="sep" style="left:661px;top:451px"></div><div class="t" style="left:666.5px;top:452px;">Comment</div><div class="sep" style="left:772px;top:451px"></div><div class="t" style="left:778px;top:452px;">Release Difference</div><div class="sep" style="left:915px;top:451px"></div><svg class="a" style="left:305px;top:453px" width="9" height="6"><path d="M0.8 5.2 L4.5 1.5 L8.2 5.2" fill="none" stroke="#000" stroke-width="1.8"/></svg><div class="t b s" style="left:29.5px;top:469px;color:#000">unittest</div><div class="t m b s" style="left:326px;top:469px;color:#000"> 42.857% (3/7)</div><div class="t b s" style="left:565.5px;top:469px;color:#000">Passed</div><div class="t b s" style="left:665.5px;top:469px;color:#000">No</div><div class="t b s" style="left:777.5px;top:469px;color:#000">Execution missing</div><div class="t b s" style="left:50px;top:482px;color:#000">TestTextEdit</div><div class="t m b s" style="left:326px;top:482px;color:#000"> 42.857% (3/7)</div><div class="t b s" style="left:565.5px;top:482px;color:#000">Passed</div><div class="t b s" style="left:665.5px;top:482px;color:#000">No</div><div class="t b s" style="left:777.5px;top:482px;color:#000">Execution missing</div><div class="t b s" style="left:69.5px;top:495px;color:#000">tst_saveFile</div><div class="t m b s" style="left:326px;top:495px;color:#000"> 42.857% (3/7)</div><div class="t b s" style="left:565.5px;top:495px;color:#000">Passed</div><div class="t b s" style="left:665.5px;top:495px;color:#000">No</div><div class="t b s" style="left:777.5px;top:495px;color:#000">Execution missing</div><div class="t b s" style="left:29.5px;top:508px;color:#000">SaveAs clicked before Save clicked</div><div class="t m b s" style="left:326px;top:508px;color:#000"> 42.857% (3/7)</div><div class="t b s" style="left:565.5px;top:508px;color:#000">Unknown</div><div class="t b s" style="left:665.5px;top:508px;color:#000">No</div><div class="t b s" style="left:777.5px;top:508px;color:#000">Execution missing</div><div class="t" style="left:49px;top:521px;letter-spacing:-0.36px">Save clicked</div><div class="t m " style="left:326px;top:521px;color:#55534c"> 85.714% (6/7)</div><div class="t" style="left:565.5px;top:521px;letter-spacing:-0.3px">Unknown</div><div class="t" style="left:665.5px;top:521px;">No</div><div class="t" style="left:777.5px;top:521px;letter-spacing:-0.2px">Existing for both version</div><div class="exp" style="left:12px;top:471px"></div><div class="dot" style="left:21px;top:475px;width:6px"></div><div class="exp" style="left:32px;top:484px"></div><div class="dot" style="left:41px;top:488px;width:6px"></div><div class="dotv" style="left:56px;top:494px;height:8px"></div><div class="dot" style="left:57px;top:501px;width:10px"></div><div class="dotv" style="left:16px;top:480px;height:48px"></div><div class="dot" style="left:17px;top:514px;width:10px"></div><div class="dot" style="left:17px;top:527px;width:10px"></div><div class="a" style="left:32px;top:521px;width:13px;height:13px;box-sizing:border-box;border:1px solid #948c78;background:#fcfbf7"></div><svg class="a" style="left:6px;top:563px" width="22" height="22" viewBox="0 0 22 22"><use href="#filt"/></svg><div class="inp" style="left:29px;top:563px;width:792px;height:22px"></div><div class="a" style="left:823px;top:563.5px;width:20.5px;height:20.5px;background:linear-gradient(#ddd6ca,#d7d0c3)"></div><svg class="a" style="left:822px;top:563px" width="22" height="22"><path d="M3.8 3.6 L18.8 18.1 M18.8 3.6 L3.8 18.1" stroke="#000" stroke-width="2.4" fill="none"/></svg><div class="a" style="left:859.3px;top:563.5px;width:21px;height:20.5px;background:linear-gradient(#ddd6ca,#d7d0c3)"></div><svg class="a" style="left:859px;top:563px" width="22" height="22"><path d="M3.2 3.6 L18.4 18.1 M18.4 3.6 L3.2 18.1" stroke="#000" stroke-width="2.4" fill="none"/><circle cx="13.9" cy="13.7" r="6.1" fill="rgba(255,255,255,.55)" stroke="#e01818" stroke-width="2.1"/><path d="M9.6 9.4 L18.2 18" stroke="#e01818" stroke-width="2.1"/></svg><div class="btn" style="left:895px;top:563px;width:24px;height:22px"></div><div class="t b" style="left:902.5px;top:567px;letter-spacing:0.3px">...</div><svg class="a" style="left:903px;top:596px" width="17" height="17"><path d="M1 17 L17 1 M5 17 L17 5 M9 17 L17 9 M13 17 L17 13" stroke="#fbfaf6" stroke-width="1.3" fill="none"/></svg>
</body></html>
